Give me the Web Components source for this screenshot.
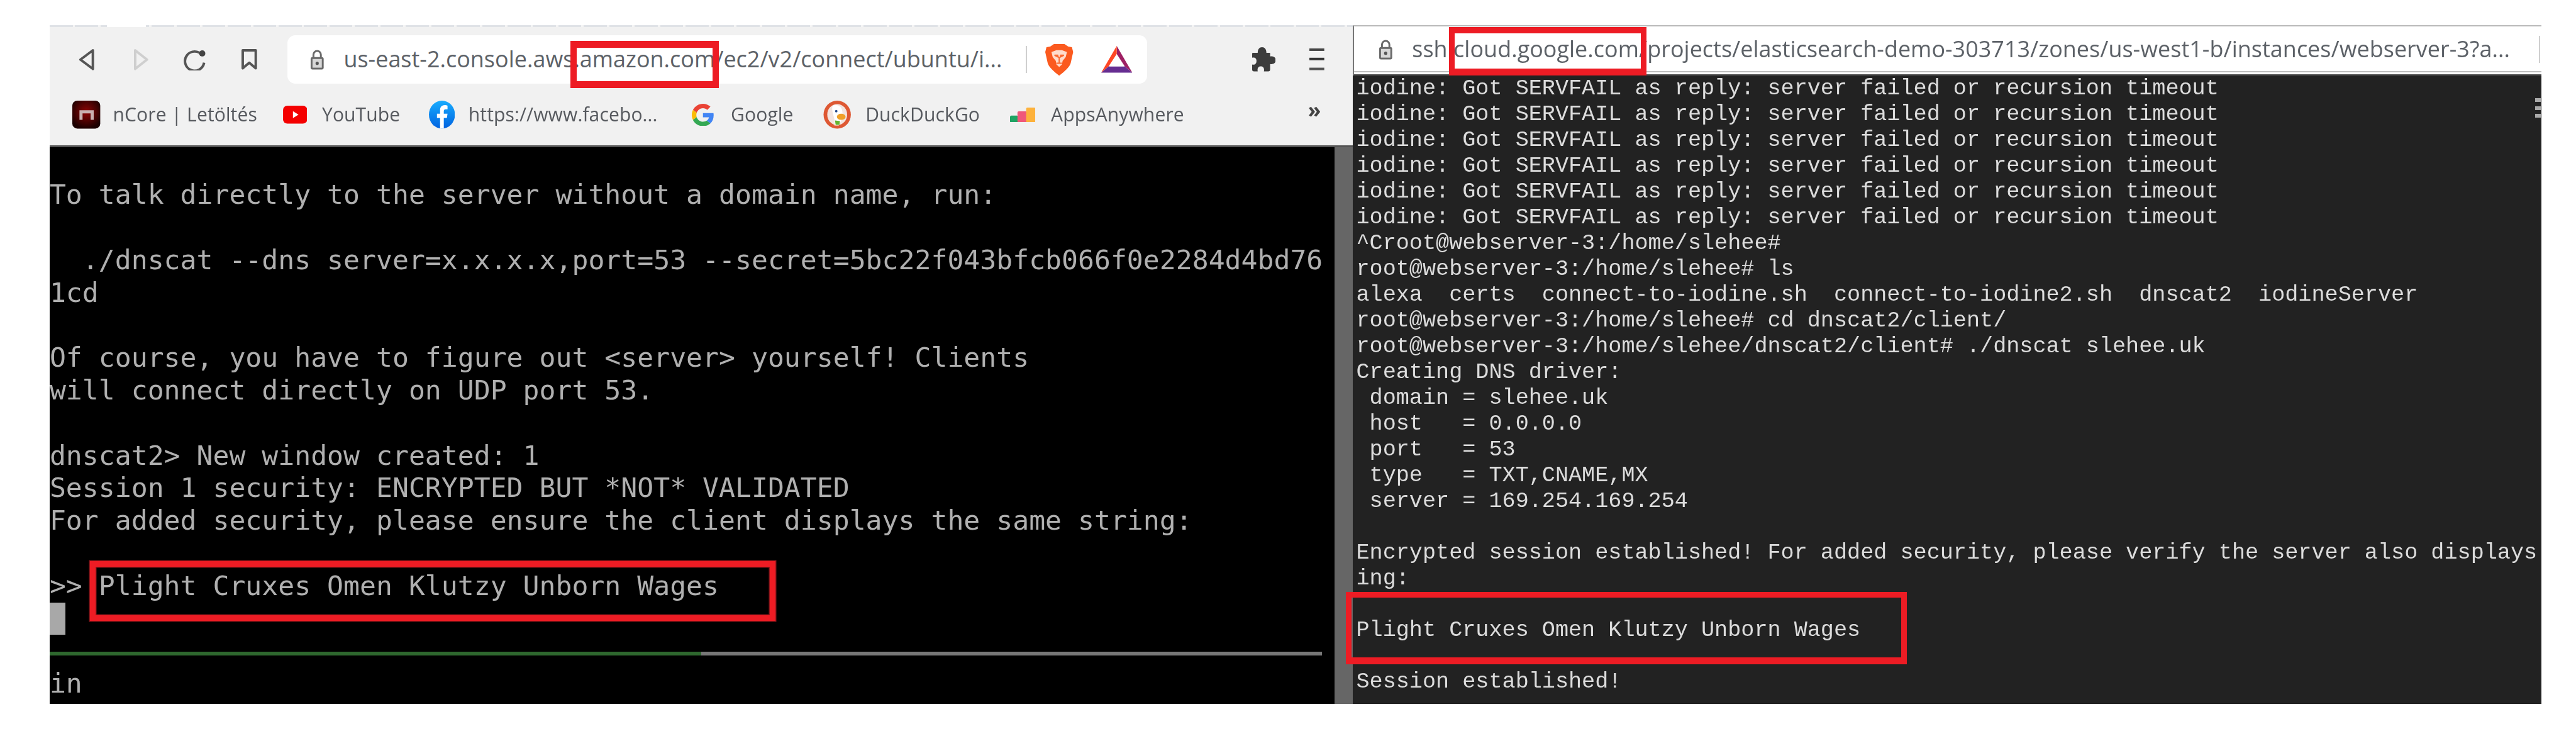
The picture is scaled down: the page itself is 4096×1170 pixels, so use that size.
<!DOCTYPE html>
<html lang="en"><head><meta charset="utf-8"><title>dnscat2 session</title>
<style>html,body{margin:0;padding:0;background:#fff;overflow:hidden}</style>
</head><body>
<app-root></app-root>
<script>
function def(name, html){
  customElements.define(name, class extends HTMLElement{
    constructor(){super();this.attachShadow({mode:'open'}).innerHTML=html;}
  });
}
const UI='"Open Sans","Noto Sans",sans-serif';
const ic=(w,h,body,extra='')=>`<svg width="${w}" height="${h}" viewBox="0 0 ${w} ${h}" style="display:block;flex:none;${extra}">${body}</svg>`;

const ICONS={
 back:ic(27,36,'<path d="M24 3 4 18 24 33Z" fill="none" stroke="#555" stroke-width="4" stroke-linejoin="round"/>'),
 fwd:ic(25,36,'<path d="M3 3 22 18 3 33Z" fill="none" stroke="#cfcfcf" stroke-width="4" stroke-linejoin="round"/>'),
 reload:ic(38,36,'<path d="M31 11A15.5 15.5 0 1 0 34 23" fill="none" stroke="#555" stroke-width="4"/><circle cx="31" cy="8" r="5" fill="#444"/>'),
 mark:ic(27,35,'<path d="M3 3H24V32L13.5 23 3 32Z" fill="none" stroke="#555" stroke-width="4" stroke-linejoin="round"/>'),
 lock:ic(27,33,'<path d="M7.5 14V9a6 6 0 0 1 12 0v5" fill="none" stroke="#6a6a6a" stroke-width="3"/><rect x="3" y="13" width="21" height="20" rx="3" fill="#6a6a6a"/><rect x="6" y="16" width="15" height="14" fill="#d8d8d8"/><circle cx="13.5" cy="23" r="2.6" fill="#555"/>'),
 brave:ic(45,51,'<path d="M8 4 14 0H31L37 4 43 5 45 13 41 31C39 38 30 45 22.5 51 15 45 6 38 4 31L0 13 2 5Z" fill="#fb5a1f"/><path d="M10 13 18 10H27L35 13 33 21 28 27 27 33 22.5 37 18 33 17 27 12 21Z" fill="#ffdccb"/><path d="M15 18h5l1 3zM30 18h-5l-1 3zM22.5 21v9M18 31h9" stroke="#fb6a32" stroke-width="2" fill="#fb6a32"/>'),
 bat:ic(50,43,'<path d="M25 0 50 43 38 33 25 13Z" fill="#9e1f63"/><path d="M25 0V13L12 33 0 43Z" fill="#ff4724"/><path d="M0 43H50L38 33H12Z" fill="#662d91"/><path d="M25 15 37 33H13Z" fill="#fff"/>'),
 puzzle:ic(40,39,'<path d="M3 9H11C11 3 14 0 18 0S25 3 25 9H31V15C36 14 40 16 40 21S36 28 31 27V36Q31 39 28 39H21C22 34 20 31 16 31S10 34 11 39H5Q2 39 2 36V28C7 29 9 26 9 22S6 16 2 17V11Q2 9 3 9Z" fill="#3c3c3c"/>'),
 menu:ic(24,35,'<rect y="0" width="24" height="4" fill="#444"/><rect y="15" width="24" height="4" fill="#333"/><rect y="31" width="24" height="4" fill="#555"/>'),
 ncore:ic(45,45,'<defs><radialGradient id="nc" cx=".5" cy=".4" r=".6"><stop offset="0" stop-color="#8f0505"/><stop offset="1" stop-color="#1c0000"/></radialGradient></defs><rect width="45" height="45" rx="8" fill="url(#nc)"/><path d="M14 31V18H32V31" fill="none" stroke="#c9b0b0" stroke-width="5"/>'),
 yt:ic(39,29,'<rect width="39" height="29" rx="7" fill="#f40000"/><path d="M16 9 25 14.5 16 20Z" fill="#fff"/>'),
 fb:ic(42,45,'<defs><linearGradient id="fbg" x1="0" y1="0" x2="0" y2="1"><stop offset="0" stop-color="#18acfe"/><stop offset="1" stop-color="#0163e0"/></linearGradient></defs><ellipse cx="21" cy="22.5" rx="21" ry="22.5" fill="url(#fbg)"/><path d="M18 45V28H13V21H18V15C18 10 21 7 26 7Q28 7 30 8V14H27C25 14 24 15 24 17V21H30L29 28H24V45Z" fill="#fff"/>'),
 g:`<svg width="36" height="36" viewBox="0 0 48 48" style="display:block;flex:none"><path fill="#EA4335" d="M24 9.5c3.54 0 6.71 1.22 9.21 3.6l6.85-6.85C35.9 2.38 30.47 0 24 0 14.62 0 6.51 5.38 2.56 13.22l7.98 6.19C12.43 13.72 17.74 9.5 24 9.5z"/><path fill="#4285F4" d="M46.98 24.55c0-1.57-.15-3.09-.38-4.55H24v9.02h12.94c-.58 2.96-2.26 5.48-4.78 7.18l7.73 6c4.51-4.18 7.09-10.36 7.09-17.65z"/><path fill="#FBBC05" d="M10.53 28.59c-.48-1.45-.76-2.99-.76-4.59s.27-3.14.76-4.59l-7.98-6.19C.92 16.46 0 20.12 0 24c0 3.88.92 7.54 2.56 10.78l7.97-6.19z"/><path fill="#34A853" d="M24 48c6.48 0 11.93-2.13 15.89-5.81l-7.73-6c-2.15 1.45-4.92 2.3-8.16 2.3-6.26 0-11.57-4.22-13.47-9.91l-7.98 6.19C6.51 42.62 14.62 48 24 48z"/></svg>`,
 ddg:ic(45,45,'<ellipse cx="22.5" cy="22.5" rx="22" ry="22.5" fill="#de5833"/><ellipse cx="22.5" cy="22.5" rx="16" ry="17" fill="#f3e4df"/><path d="M15 8C24 5 31 10 31 20 31 30 28 34 25 40H18C21 30 12 18 15 8Z" fill="#fff"/><ellipse cx="29" cy="26" rx="7" ry="5" fill="#f0a028"/><path d="M19 32 27 33 26 39 20 39Z" fill="#65b32e"/><circle cx="21" cy="17" r="2" fill="#2d4f8e"/>'),
 apps:ic(41,24,'<rect x="0" y="13" width="13" height="11" rx="2" fill="#20a464"/><rect x="12" y="6" width="15" height="18" rx="2" fill="#f0587a"/><rect x="26" y="0" width="15" height="24" rx="2" fill="#fdb23c"/>')
};

def('nav-url',`<style>
:host{display:flex;align-items:center;width:1386px;height:78px;background:#fff;border-radius:13px;flex:none}
.t{margin-left:29px;flex:1;min-width:0;white-space:nowrap;overflow:hidden;font:36.4px/78px ${UI};color:#5c6167;letter-spacing:.04px}
.d{width:2px;height:43px;background:#cfcfcf;margin:0 30px 0 0;flex:none}
.l{margin-left:35px}
.e{margin-right:24px;display:flex;gap:45px;align-items:center}
</style><span class="l">${ICONS.lock}</span><span class="t"><slot></slot></span><span class="d"></span><span class="e">${ICONS.brave}${ICONS.bat}</span>`);

def('bm-item',`<style>
:host{display:flex;align-items:center;flex:none;width:var(--w);white-space:nowrap;font:30.5px/1 ${UI};color:#56595e;letter-spacing:.1px}
.i{display:flex;margin-right:var(--g)}
</style><span class="i"><slot name="i"></slot></span><slot></slot>`);

def('toolbar-left',`<style>
:host{display:block;flex:none;height:196px;background:#f1f1f1;box-sizing:border-box;border-bottom:4px solid #555}
.ticks{height:3px;background:linear-gradient(#fff,#fff) 92px 0/63px 100% no-repeat,repeating-linear-gradient(90deg,#dfe2e6 0 37px,#f4f4f4 37px 41px)}
.nav{height:104px;display:flex;align-items:center;padding-left:46px}
.nav>*{flex:none}
.books{height:74px;display:flex;align-items:center;padding-left:37px;padding-right:51px}
.more{margin-left:auto;font:700 34px/1 ${UI};color:#444;position:relative;top:-8px}
.wrap{filter:blur(.55px)}
</style><div class="wrap"><div class="ticks"></div>
<div class="nav">${ICONS.back}<span style="width:62px"></span>${ICONS.fwd}<span style="width:55px"></span>${ICONS.reload}<span style="width:55px"></span>${ICONS.mark}<span style="width:48px"></span>
<nav-url>us-east-2.console.aws.amazon.com/ec2/v2/connect/ubuntu/i...</nav-url><span style="width:167px"></span>${ICONS.puzzle}<span style="width:55px"></span>${ICONS.menu}</div>
<div class="books">
<bm-item style="--w:339px;--g:20px"><span slot="i">${ICONS.ncore}</span>nCore | Letöltés</bm-item>
<bm-item style="--w:235px;--g:24px"><span slot="i">${ICONS.yt}</span>YouTube</bm-item>
<bm-item style="--w:424px;--g:22px"><span slot="i">${ICONS.fb}</span>https://www.facebo...</bm-item>
<bm-item style="--w:212px;--g:27px"><span slot="i">${ICONS.g}</span>Google</bm-item>
<bm-item style="--w:301px;--g:23px"><span slot="i">${ICONS.ddg}</span>DuckDuckGo</bm-item>
<bm-item style="--w:300px;--g:25px"><span slot="i">${ICONS.apps}</span>AppsAnywhere</bm-item>
<span class="more">»</span>
</div></div>`);

def('term-cursor',`<style>:host{display:block;width:25px;height:52.5px;background:#a8a8a8}</style>`);
def('status-rule',`<style>
:host{display:flex;height:52.5px;box-sizing:border-box;padding:27px 20px 0 0}
i{display:block;height:6px;flex:none}
.g{width:1050px;background:#2e682e}.r{flex:1;background:#777}
</style><i class="g"></i><i class="r"></i>`);

def('term-left',`<style>
:host{display:block;flex:1;min-width:0;background:#000;overflow:hidden}
.p{padding-top:51.2px;font:43.7px/52.5px "DejaVu Sans Mono",monospace;color:#b0b0b0;white-space:pre;filter:blur(.5px)}
</style><div class="p"><slot></slot></div>`);

def('term-right',`<style>
:host{display:block;flex:1;min-height:0;background:#222;overflow:hidden;position:relative}
.p{padding:.7px 0 0 6px;font:35.65px/41.55px "Liberation Mono",monospace;color:#dcdcdc;white-space:pre;filter:blur(.5px)}
.k{position:absolute;right:1px;top:36px;display:grid;gap:7px}
.k i{display:block;width:9px;height:6px;background:#aaa}
</style><div class="p"><slot></slot></div><div class="k"><i></i><i></i><i></i></div>`);

def('window-left',`<style>
:host{display:flex;flex-direction:column;flex:none;width:2100px}
.row{flex:1;min-height:0;display:flex}
.sb{width:29px;background:#666;flex:none}
</style><toolbar-left></toolbar-left><div class="row"><slot></slot><div class="sb"></div></div>`);

def('header-right',`<style>
:host{display:flex;align-items:center;flex:none;height:81px;box-sizing:border-box;background:#fff;border-top:3px solid #b9b9b9;border-left:3px solid #777;position:relative}
.in{display:flex;align-items:center;height:71px;width:100%;border-bottom:3px solid #bdbdbd;box-sizing:content-box;margin-bottom:4px;filter:blur(.5px)}
.l{margin-left:38px;margin-right:29px;flex:none}
.t{flex:1;min-width:0;white-space:nowrap;overflow:hidden;font:36.4px/71px ${UI};color:#5c6167;letter-spacing:.05px}
.d{width:2px;height:43px;background:#cfcfcf;margin-right:2px;flex:none}
.b{position:absolute;left:0;right:0;bottom:0;height:2px;background:#555}
</style><div class="in"><span class="l">${ICONS.lock}</span><span class="t"><slot></slot></span><span class="d"></span></div><div class="b"></div>`);

def('window-right',`<style>
:host{display:flex;flex-direction:column;flex:1;min-width:0}
</style><header-right>ssh.cloud.google.com/projects/elasticsearch-demo-303713/zones/us-west1-b/instances/webserver-3?a...</header-right><slot></slot>`);

def('red-box',`<style>
:host{position:absolute;box-sizing:border-box;border:solid #ed1c24;border-width:var(--b,11px);left:var(--x);top:var(--y);width:var(--w);height:var(--h);pointer-events:none;box-shadow:var(--s,none)}
</style>`);

def('app-root',`<style>
:host{display:block;zoom:.98651;width:4152px;height:1186px;position:relative;overflow:hidden;background:#fff}
.stage{box-sizing:border-box;width:4016px;margin-left:80px;height:1093px;display:flex}
.top{height:41px}
</style>
<div class="top"></div>
<div class="stage">
<window-left><term-left>To talk directly to the server without a domain name, run:

  ./dnscat --dns server=x.x.x.x,port=53 --secret=5bc22f043bfcb066f0e2284d4bd76
1cd

Of course, you have to figure out &lt;server&gt; yourself! Clients
will connect directly on UDP port 53.

dnscat2&gt; New window created: 1
Session 1 security: ENCRYPTED BUT *NOT* VALIDATED
For added security, please ensure the client displays the same string:

&gt;&gt; Plight Cruxes Omen Klutzy Unborn Wages
<term-cursor></term-cursor><status-rule></status-rule>in</term-left></window-left>
<window-right><term-right>iodine: Got SERVFAIL as reply: server failed or recursion timeout
iodine: Got SERVFAIL as reply: server failed or recursion timeout
iodine: Got SERVFAIL as reply: server failed or recursion timeout
iodine: Got SERVFAIL as reply: server failed or recursion timeout
iodine: Got SERVFAIL as reply: server failed or recursion timeout
iodine: Got SERVFAIL as reply: server failed or recursion timeout
^Croot@webserver-3:/home/slehee#
root@webserver-3:/home/slehee# ls
alexa  certs  connect-to-iodine.sh  connect-to-iodine2.sh  dnscat2  iodineServer
root@webserver-3:/home/slehee# cd dnscat2/client/
root@webserver-3:/home/slehee/dnscat2/client# ./dnscat slehee.uk
Creating DNS driver:
 domain = slehee.uk
 host   = 0.0.0.0
 port   = 53
 type   = TXT,CNAME,MX
 server = 169.254.169.254

Encrypted session established! For added security, please verify the server also displays
ing:

Plight Cruxes Omen Klutzy Unborn Wages

Session established!</term-right></window-right>
</div>
<red-box style="--x:919px;--y:66px;--w:240px;--h:76px;--b:12px 11px"></red-box>
<red-box style="--x:2335px;--y:44px;--w:319px;--h:78px;--b:11px 10px 12px"></red-box>
<red-box style="--x:145px;--y:904px;--w:1105px;--h:97px;--b:10px 10px;--s:0 0 0 1.5px #8e161a,inset 0 0 0 1.5px #8e161a"></red-box>
<red-box style="--x:2169px;--y:954px;--w:904px;--h:116px;--b:10px 10px 12px"></red-box>
`);
</script>
</body></html>
